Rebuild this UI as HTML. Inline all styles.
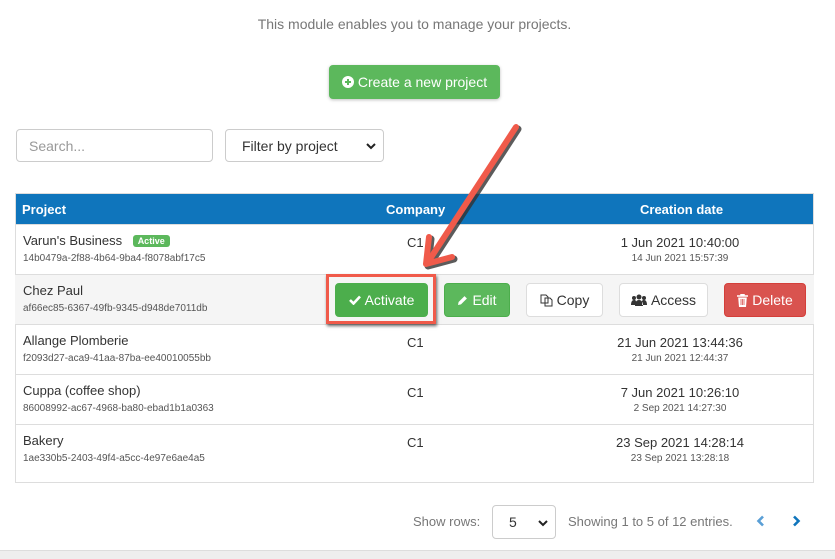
<!DOCTYPE html>
<html><head><meta charset="utf-8"><style>
body{margin:0;width:835px;height:558px;background:#fff;font-family:"Liberation Sans",Arial,sans-serif;position:relative;overflow:hidden;color:#333}
.a{position:absolute}
.btn{position:absolute;border-radius:4px;font-size:14px;display:flex;align-items:center;justify-content:center;box-sizing:border-box}
.btn svg{margin-right:4px}
.g{background:#5cb85c;color:#fff;border:1px solid #4cae4c}
.w{background:#fff;color:#333;border:1px solid #ddd}
.r{background:#d9534f;color:#fff;border:1px solid #d43f3a}
.row{position:absolute;left:15px;width:799px;height:50px;border-top:1px solid #ddd;box-sizing:border-box}
.n{position:absolute;left:8px;top:8px;font-size:13px;color:#333}
.id{position:absolute;left:8px;top:28px;font-size:10px;color:#555}
.c{position:absolute;left:392px;top:10px;font-size:13px}
.d1{position:absolute;left:540px;width:250px;text-align:center;top:10px;font-size:13px}
.d2{position:absolute;left:540px;width:250px;text-align:center;top:28px;font-size:10px;color:#555}
</style></head><body>
<div class="a" style="left:-3px;width:835px;top:16px;text-align:center;font-size:14px;color:#777">This module enables you to manage your projects.</div>
<div class="btn g" style="left:329px;top:65px;width:171px;height:34px;border-color:#5cb85c;box-shadow:0 1px 3px rgba(0,0,0,.25)">
<svg width="12" height="12" viewBox="0 0 12 12"><circle cx="6" cy="6" r="6" fill="#fff"/><path d="M6 3v6M3 6h6" stroke="#5cb85c" stroke-width="2"/></svg>Create a new project</div>
<div class="a" style="left:16px;top:129px;width:197px;height:33px;border:1px solid #ccc;border-radius:4px;box-sizing:border-box;font-size:14px;color:#999;padding:8px 12px">Search...</div>
<div class="a" style="left:225px;top:129px;width:159px;height:33px;border:1px solid #ccc;border-radius:4px;box-sizing:border-box;font-size:14px;color:#333;padding:8px 0 0 16px">Filter by project<svg class="a" style="right:7px;top:13px" width="10" height="7" viewBox="0 0 10 7"><path d="M1 1l4 4 4-4" fill="none" stroke="#222" stroke-width="2"/></svg></div>

<div class="a" style="left:15px;top:193px;width:799px;height:32px;background:#0f75bc;color:#fff;font-weight:bold;font-size:13px;border:1px solid #ddd;box-sizing:border-box">
<span class="a" style="left:6px;top:8px">Project</span><span class="a" style="left:370px;top:8px">Company</span><span class="a" style="left:624px;top:8px">Creation date</span></div>
<div class="a" style="left:15px;top:225px;width:799px;height:258px;border:1px solid #ddd;border-top:0;box-sizing:border-box"></div>

<div class="row" style="top:224px"><span class="n">Varun's Business <span style="background:#5cb85c;color:#fff;font-size:9px;font-weight:bold;padding:1px 5px;border-radius:3px;margin-left:7px;position:relative;top:-1px">Active</span></span><span class="id">14b0479a-2f88-4b64-9ba4-f8078abf17c5</span><span class="c">C1</span><span class="d1">1 Jun 2021 10:40:00</span><span class="d2">14 Jun 2021 15:57:39</span></div>
<div class="row" style="top:274px;background:#f5f5f5"><span class="n">Chez Paul</span><span class="id">af66ec85-6367-49fb-9345-d948de7011db</span></div>
<div class="row" style="top:324px"><span class="n">Allange Plomberie</span><span class="id">f2093d27-aca9-41aa-87ba-ee40010055bb</span><span class="c">C1</span><span class="d1">21 Jun 2021 13:44:36</span><span class="d2">21 Jun 2021 12:44:37</span></div>
<div class="row" style="top:374px"><span class="n">Cuppa (coffee shop)</span><span class="id">86008992-ac67-4968-ba80-ebad1b1a0363</span><span class="c">C1</span><span class="d1">7 Jun 2021 10:26:10</span><span class="d2">2 Sep 2021 14:27:30</span></div>
<div class="row" style="top:424px;height:59px"><span class="n">Bakery</span><span class="id">1ae330b5-2403-49f4-a5cc-4e97e6ae4a5</span><span class="c">C1</span><span class="d1">23 Sep 2021 14:28:14</span><span class="d2">23 Sep 2021 13:28:18</span></div>

<div class="a" style="left:326px;top:274px;width:110px;height:50px;border:3px solid #f05a4a;box-sizing:border-box;box-shadow:1px 2px 3px rgba(0,0,0,.6)"></div>
<div class="btn g" style="left:335px;top:283px;width:93px;height:34px;background:#4cae4c"><svg width="12" height="10" viewBox="0 0 12 10"><path d="M1 5l3.5 3.5L11 1.5" fill="none" stroke="#fff" stroke-width="2.6"/></svg>Activate</div>
<div class="btn g" style="left:444px;top:283px;width:66px;height:34px"><svg width="11" height="11" viewBox="0 0 11 11"><path d="M1 10l.6-3L7.5 1.1l2.4 2.4L4 9.4z" fill="#fff"/></svg>Edit</div>
<div class="btn w" style="left:526px;top:283px;width:77px;height:34px"><svg width="13" height="13" viewBox="0 0 13 13"><path d="M1 1h5l2 2v6H1z M5 4h5l2 2v6H5z" fill="#fff" stroke="#333" stroke-width="1"/></svg>Copy</div>
<div class="btn w" style="left:619px;top:283px;width:89px;height:34px"><svg width="16" height="12" viewBox="0 0 16 12"><circle cx="8" cy="3" r="2.5" fill="#333"/><circle cx="3" cy="4" r="2" fill="#333"/><circle cx="13" cy="4" r="2" fill="#333"/><path d="M4 12c0-4 1.5-6 4-6s4 2 4 6zM0 11c0-3 1-5 3-5s2 1 2 2v3zM16 11c0-3-1-5-3-5s-2 1-2 2v3z" fill="#333"/></svg>Access</div>
<div class="btn r" style="left:724px;top:283px;width:82px;height:34px"><svg width="11" height="13" viewBox="0 0 11 13"><path d="M0 2h11M4 2V0.5h3V2" stroke="#fff" stroke-width="1.5" fill="none"/><path d="M1.2 3.5h8.6L9 13H2z" fill="#fff"/><path d="M4 5v6M5.5 5v6M7 5v6" stroke="#d9534f" stroke-width=".8"/></svg>Delete</div>

<svg class="a" style="left:0;top:0" width="835" height="558">
<g fill="none" stroke-linecap="round" stroke-linejoin="round">
<g stroke="#333" stroke-width="7" transform="translate(2,2)" opacity=".8"><path d="M516 127L428 262"/><path d="M429 237L426 264L452 257"/></g>
<g stroke="#f05a4a" stroke-width="6"><path d="M516 127L428 262"/><path d="M429 237L426 264L452 257"/></g>
</g></svg>

<div class="a" style="left:413px;top:514px;font-size:13px;color:#777">Show rows:</div>
<div class="a" style="left:492px;top:505px;width:64px;height:34px;border:1px solid #ccc;border-radius:4px;box-sizing:border-box;font-size:14px;padding:8px 0 0 16px">5<svg class="a" style="right:7px;top:14px" width="10" height="7" viewBox="0 0 10 7"><path d="M1 1l4 4 4-4" fill="none" stroke="#222" stroke-width="2"/></svg></div>
<div class="a" style="left:568px;top:514px;font-size:13px;color:#777">Showing 1 to 5 of 12 entries.</div>
<svg class="a" style="left:756px;top:515px" width="10" height="12" viewBox="0 0 10 12"><path d="M7 1.5L2.5 6 7 10.5" fill="none" stroke="#5a9fd6" stroke-width="2.6"/></svg>
<svg class="a" style="left:791px;top:515px" width="10" height="12" viewBox="0 0 10 12"><path d="M3 1.5L7.5 6 3 10.5" fill="none" stroke="#0f75bc" stroke-width="2.6"/></svg>
<div class="a" style="left:0;top:550px;width:835px;height:8px;background:#eee;border-top:1px solid #ddd"></div>
</body></html>
